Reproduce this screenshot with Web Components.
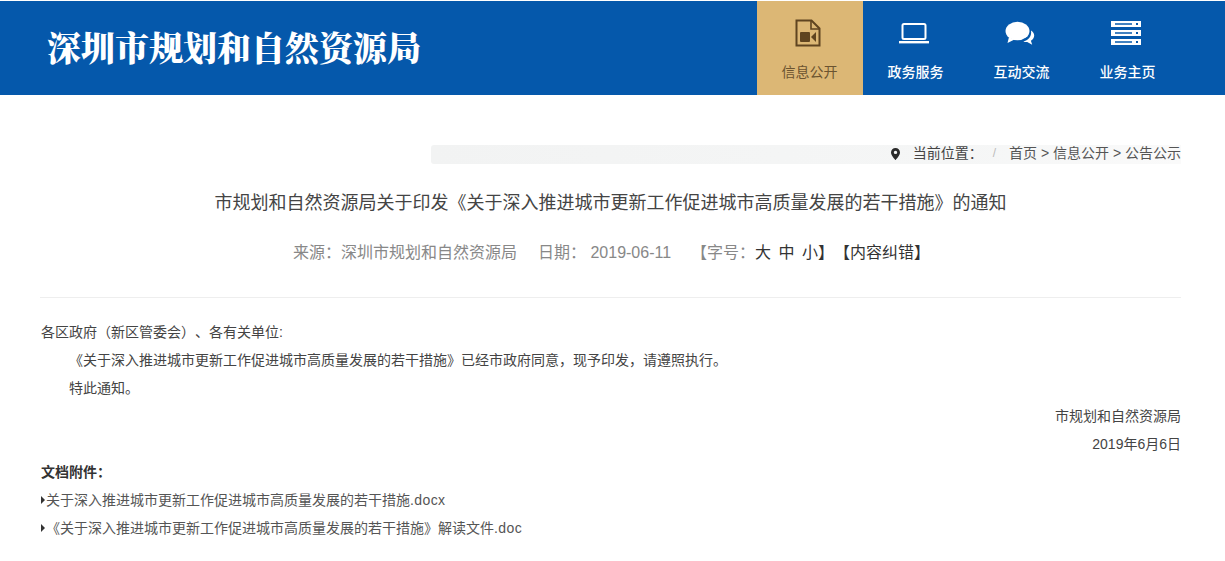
<!DOCTYPE html>
<html lang="zh">
<head>
<meta charset="utf-8">
<title>通知</title>
<style>
  body { margin: 0; background: #fff; font-family: "Liberation Sans", "Noto Sans CJK SC", sans-serif; text-spacing-trim: space-all; }
</style>
</head>
<body>
<site-header>
  <nav-item slot="nav" label="信息公开" active>
    <svg viewBox="0 0 26 28" width="26" height="28" fill="none"><path d="M1.500 1.500h15l8 8v17h-23z" stroke="#5f4420" stroke-width="2"/><path d="M16 2v8h8" stroke="#5f4420" stroke-width="1.600"/><rect x="5" y="13" width="10" height="10" rx="1" fill="#5f4420"/><path d="M21 13v10l-5-5z" fill="#5f4420"/></svg>
  </nav-item>
  <nav-item slot="nav" label="政务服务">
    <svg viewBox="0 0 32 24" width="32" height="24" fill="none"><rect x="4.500" y="3" width="23" height="15" rx="1.500" stroke="#fff" stroke-width="2"/><rect x="1" y="20" width="30" height="2.400" fill="#fff"/></svg>
  </nav-item>
  <nav-item slot="nav" label="互动交流">
    <svg viewBox="0 0 30 24" width="30" height="24"><path d="M26 9.500c2 1.300 3.200 3 3.200 5 0 2.200-1.300 4-3.300 5.200l1.300 4-5-2.800c-1.400.1-2.600 0-3.900-.5 4.500-.6 8.700-4.500 7.700-10.900z" fill="#fff"/><ellipse cx="12.500" cy="10" rx="12" ry="9.300" fill="#fff"/><path d="M4 16l-1.500 6 7-3.500z" fill="#fff"/></svg>
  </nav-item>
  <nav-item slot="nav" label="业务主页">
    <svg viewBox="0 0 30 24" width="30" height="24"><path fill-rule="evenodd" fill="#fff" d="M0 0h30v6H0zM4 2.300v1.400h17V2.300zM25 2v2h2V2zM0 9h30v6H0zM4 11.300v1.400h17v-1.400zM25 11v2h2v-2zM0 18h30v6H0zM4 20.300v1.400h17v-1.400zM25 20v2h2v-2z"/></svg>
  </nav-item>
</site-header>

<bread-crumb></bread-crumb>

<article-head
  heading="市规划和自然资源局关于印发《关于深入推进城市更新工作促进城市高质量发展的若干措施》的通知"></article-head>

<article-body>
  <p>各区政府（新区管委会）、各有关单位:</p>
  <p class="indent">《关于深入推进城市更新工作促进城市高质量发展的若干措施》已经市政府同意，现予印发，请遵照执行。</p>
  <p class="indent">特此通知。</p>
  <p class="right">市规划和自然资源局</p>
  <p class="right">2019年6月6日</p>
  <p class="strong">文档附件：</p>
  <attach-link>关于深入推进城市更新工作促进城市高质量发展的若干措施<span>.docx</span></attach-link>
  <attach-link>《关于深入推进城市更新工作促进城市高质量发展的若干措施》解读文件<span>.doc</span></attach-link>
</article-body>

<script>
class SiteHeader extends HTMLElement {
  constructor() {
    super();
    this.attachShadow({ mode: 'open' }).innerHTML = `
      <style>
        :host {
          display: flex;
          height: 94px;
          margin-top: 1px;
          padding: 0 44px 0 47px;
          background: #0558ab;
          align-items: stretch;
          justify-content: space-between;
        }
        .logo {
          font-family: "Noto Serif CJK SC", "Noto Sans CJK SC", serif;
          font-weight: 900;
          font-size: 34px;
          line-height: 92px;
          color: #fff;
          white-space: nowrap;
        }
        nav { display: flex; }
      </style>
      <div class="logo">深圳市规划和自然资源局</div>
      <nav><slot name="nav"></slot></nav>`;
  }
}

class NavItem extends HTMLElement {
  constructor() {
    super();
    this.attachShadow({ mode: 'open' }).innerHTML = `
      <style>
        :host {
          display: flex;
          flex-direction: column;
          align-items: center;
          width: 106px;
          color: #fff;
          font-size: 14px;
        }
        :host([active]) { background: #dcb775; color: #6b5330; }
        .icon { height: 28px; margin-top: 18px; padding-right: 5px; display: flex; align-items: center; justify-content: center; }
        .label { margin-top: 15px; padding-right: 1px; line-height: 20px; font-weight: 500; }
        :host([active]) .label { font-weight: 400; }
      </style>
      <div class="icon"><slot></slot></div>
      <div class="label"></div>`;
    this.shadowRoot.querySelector('.label').textContent = this.getAttribute('label');
  }
}

class BreadCrumb extends HTMLElement {
  constructor() {
    super();
    this.attachShadow({ mode: 'open' }).innerHTML = `
      <style>
        :host {
          display: flex;
          box-sizing: border-box;
          align-items: center;
          height: 19px;
          padding-bottom: 2px;
          margin: 50px 44px 0 431px;
          background: linear-gradient(90deg, #f2f3f3 0, #f5f6f6 70%, #fafafa 100%);
          border-radius: 3px 0 0 3px;
          font-size: 14px;
          line-height: 17px;
          color: #555;
          justify-content: flex-end;
          white-space: nowrap;
        }
        svg { margin-right: 13px; }
        .cur { color: #444; }
        .sep { color: #bbb; margin: 0 13px 0 10px; font-size: 12px; }
      </style>
      <svg viewBox="0 0 9 12" width="9" height="12"><path fill-rule="evenodd" fill="#2b2b2b" d="M4.500 0C2 0 0 2 0 4.400 0 7.300 4.500 12 4.500 12S9 7.300 9 4.400C9 2 7 0 4.500 0zm0 2.700a1.700 1.700 0 1 1 0 3.400 1.700 1.700 0 0 1 0-3.400z"/></svg>
      <span class="cur">当前位置：</span><span class="sep">/</span>
      <span>首页 &gt; 信息公开 &gt; 公告公示</span>`;
  }
}

class ArticleHead extends HTMLElement {
  constructor() {
    super();
    this.attachShadow({ mode: 'open' }).innerHTML = `
      <style>
        :host {
          display: block;
          margin: 0 44px 0 40px;
          padding: 25px 0 31px;
          border-bottom: 1px solid #eee;
          text-align: center;
        }
        h1 { margin: 0; font-size: 18px; font-weight: 400; line-height: 28px; color: #444; }
        .meta {
          margin-top: 23px;
          padding-left: 2px;
          display: flex;
          justify-content: center;
          font-size: 16px;
          line-height: 26px;
          color: #888;
          white-space: nowrap;
        }
        .date { margin-left: 21px; }
        .size { margin-left: 20px; }
        .dark { color: #333; }
        .sizes { word-spacing: 3px; }
      </style>
      <h1></h1>
      <div class="meta">
        <span>来源：深圳市规划和自然资源局</span>
        <span class="date">日期： 2019-06-11</span>
        <span class="size">【字号：<span class="dark sizes">大 中 小</span><span class="dark">】【内容纠错】</span></span>
      </div>`;
    this.shadowRoot.querySelector('h1').textContent = this.getAttribute('heading');
  }
}

class ArticleBody extends HTMLElement {
  constructor() {
    super();
    this.attachShadow({ mode: 'open' }).innerHTML = `
      <style>
        :host {
          display: block;
          margin: 20px 44px 0 41px;
          font-size: 14px;
          line-height: 28px;
          color: #444;
        }
        ::slotted(p) { margin: 0; }
        ::slotted(.indent) { text-indent: 28px; }
        ::slotted(.right) { text-align: right; }
        ::slotted(.strong) { font-weight: 700; color: #333; }
      </style>
      <slot></slot>`;
  }
}

class AttachLink extends HTMLElement {
  constructor() {
    super();
    this.attachShadow({ mode: 'open' }).innerHTML = `
      <style>
        :host { display: flex; align-items: center; line-height: 28px; color: #555; white-space: nowrap; }
        i { flex: none; width: 0; height: 0; border-left: 4px solid #333; border-top: 4px solid transparent; border-bottom: 4px solid transparent; margin-right: 1px; }
        ::slotted(span) { letter-spacing: .4px; }
      </style>
      <i></i><div><slot></slot></div>`;
  }
}

customElements.define('nav-item', NavItem);
customElements.define('site-header', SiteHeader);
customElements.define('bread-crumb', BreadCrumb);
customElements.define('article-head', ArticleHead);
customElements.define('article-body', ArticleBody);
customElements.define('attach-link', AttachLink);
</script>
</body>
</html>
